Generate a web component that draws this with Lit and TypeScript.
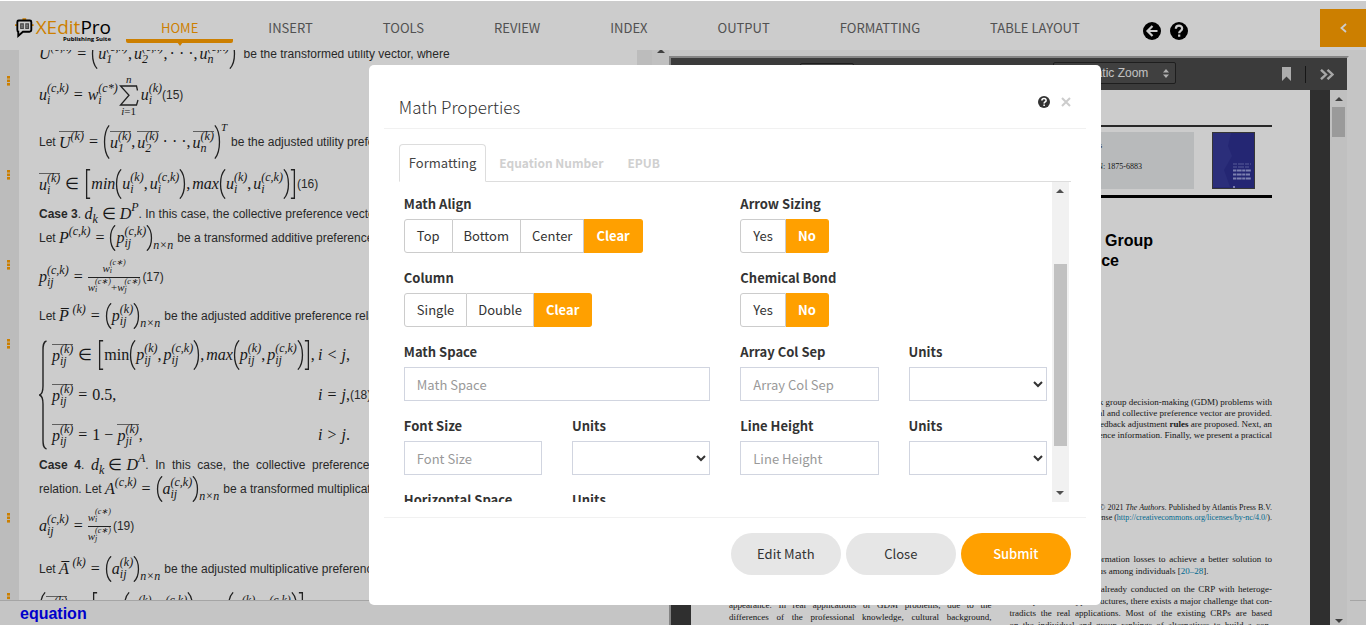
import { LitElement, html, css, svg, nothing, TemplateResult } from "lit";
import { customElement, property } from "lit/decorators.js";

type Part = TemplateResult | string;

/* ---------- math helpers ---------- */

const fencePaths: Record<string, TemplateResult> = {
  "(": svg`<path d="M7 0.5C0 9 0 31 7 39.5" />`,
  ")": svg`<path d="M1 0.5C8 9 8 31 1 39.5" />`,
  "[": svg`<path d="M7 1H3V39H7" />`,
  "]": svg`<path d="M1 1H5V39H1" />`,
};

const fence = (kind: string, size = "md") =>
  html`<svg class="fence ${size}" viewBox="0 0 8 40" preserveAspectRatio="none" aria-hidden="true">${fencePaths[kind]}</svg>`;

const scr = (base: string, sup: Part, sub: Part = "", bar = false) =>
  html`<span class="atom ${bar ? "bar" : ""}"><i>${base}</i><span class="stack"><i>${sup}</i><i>${sub}</i></span></span>`;

const rel = (s: string) => html`<span class="rel">${s}</span>`;
const comma = html`<span class="comma">,</span>`;
const nxn = html`<i class="low">n×n</i>`;

@customElement("math-editor")
export class MathEditor extends LitElement {
  static styles = css`
    :host {
      display: block;
      overflow: hidden;
      font: 12px/16px "Liberation Sans", Arial, sans-serif;
      color: #333;
      background: linear-gradient(to right, #ececec 19px, #fff 19px);
    }
    .scrolled { margin-top: -8px; }
    .row { display: flex; align-items: center; white-space: pre; height: 24px; }
    .h20 { height: 20px; }
    .h28 { height: 28px; }
    .h36 { height: 36px; }
    .h40 { height: 40px; }
    .h46 { height: 46px; }
    .h54 { height: 54px; }
    .h58 { height: 58px; }
    .gap { margin-top: 6px; }
    .mark { flex: none; width: 39px; align-self: flex-start; padding: 10px 0 0 7px; box-sizing: border-box; }
    .mark.near { padding-top: 4px; }
    .mark svg { display: block; }
    .math { display: inline-flex; align-items: center; font: 16px/16px "Liberation Serif", "Times New Roman", serif; color: #1c1c1c; }
    .text { padding-left: 4px; }
    .atom { display: inline-flex; align-items: center; height: 24px; }
    .bar { border-top: 1px solid #777; height: 22px; }
    .stack { display: inline-flex; flex-direction: column; font-size: 12px; line-height: 12px; margin-top: -2px; }
    .stack i { height: 12px; }
    .rel { margin: 0 5px; }
    .comma { margin-right: 2px; }
    .fence { width: 7px; height: 30px; fill: none; stroke: #2a2a2a; }
    .fence path { stroke-width: 1.3; vector-effect: non-scaling-stroke; }
    .fence.sm { height: 26px; }
    .fence.lg { height: 34px; }
    .low { font-size: 12px; line-height: 12px; align-self: flex-end; }
    .power { font-size: 11px; line-height: 12px; align-self: flex-start; margin-top: -4px; }
    .sum { display: inline-flex; flex-direction: column; align-items: center; margin: 0 2px 0 1px; }
    .sum i, .sum small { font-size: 11px; line-height: 11px; }
    .sum svg { display: block; }
    .frac { display: inline-flex; flex-direction: column; align-items: center; font-size: 11px; line-height: 12px; margin-right: 2px; }
    .frac .atom { height: 18px; }
    .frac .stack { font-size: 8px; line-height: 8px; }
    .frac .stack i { height: 8px; }
    .frac .top { display: flex; justify-content: center; align-self: stretch; border-bottom: 1px solid #2a2a2a; }
    .frac .den { display: flex; align-items: center; }
    .cases { display: flex; height: 120px; margin-top: 7px; white-space: pre; }
    .brace { width: 8px; height: 110px; align-self: center; fill: none; stroke: #2a2a2a; margin-right: 5px; }
    .lines { display: grid; grid-template-columns: 266px auto; grid-auto-rows: 40px; align-items: center; }
    .tail { align-self: center; }
  `;

  private mark(shown = true, near = false) {
    return html`<span class="mark ${near ? "near" : ""}">${shown
      ? html`<svg width="3" height="10" fill="#ff9f00" aria-hidden="true"><rect width="3" height="2.6" /><rect y="3.5" width="3" height="2.6" /><rect y="7" width="3" height="2.6" /></svg>`
      : nothing}</span>`;
  }

  private range(b: string, sub: string, word: Part) {
    return html`${fence("[")}${word}${fence("(")}${scr(b, "(k)", sub)}${comma}${scr(b, "(c,k)", sub)}${fence(")")}${comma}<i
        >max</i>${fence("(")}${scr(b, "(k)", sub)}${comma}${scr(b, "(c,k)", sub)}${fence(")")}${fence("]")}`;
  }

  render() {
    return html`
      <div class="scrolled">
        <div class="row">
          ${this.mark(false)}
          <span class="math">${scr("U", "(c,k)")}${rel("=")}${fence("(")}${scr("u", "(c,k)", "1")}${comma}${scr("u", "(c,k)", "2")}${comma}· · ·${comma}${scr("u", "(c,k)", "n")}${fence(")")}</span>
          <span class="text"> be the transformed utility vector, where</span>
        </div>
        <div class="row h58">
          ${this.mark()}
          <span class="math">${scr("u", "(c,k)", "i")}${rel("=")}${scr("w", "(c*)", "i")}<span class="sum"
              ><i>n</i><svg width="20" height="21" viewBox="0 0 20 21" fill="none" stroke="#2a2a2a" aria-hidden="true">
                <path d="M18.5 5.5L17.500 1H1.500L10 10.200L1.500 20H17.500L19 15" stroke-width="1.300" /></svg
              ><small><i>i</i>=1</small></span>${scr("u", "(k)", "i")}</span>
          <span>(15)</span>
        </div>
        <div class="row h36">
          ${this.mark(false)}
          <span>Let </span>
          <span class="math">${scr("U", "(k)", "", true)}${rel("=")}${fence("(", "lg")}${scr("u", "(k)", "1", true)}${comma}${scr("u", "(k)", "2", true)} · · ·${comma}${scr("u", "(k)", "n", true)}${fence(")", "lg")}<i class="power">T</i></span>
          <span class="text">be the adjusted utility preference</span>
        </div>
        <div class="row h36 gap">
          ${this.mark(true, true)}
          <span class="math">${scr("u", "(k)", "i", true)}${rel("∈")}${this.range("u", "i", html`<i>min</i>`)}</span>
          <span>(16)</span>
        </div>
        <div class="row">
          ${this.mark(false)}
          <span><b>Case 3</b>. </span>
          <span class="math">${scr("d", "", "k")} ∈ ${scr("D", "P")}</span>
          <span>. In this case, the collective preference vector</span>
        </div>
        <div class="row">
          ${this.mark(false)}
          <span>Let </span>
          <span class="math">${scr("P", "(c,k)")}${rel("=")}${fence("(", "sm")}${scr("p", "(c,k)", "ij")}${fence(")", "sm")}${nxn}</span>
          <span class="text">be a transformed additive preference</span>
        </div>
        <div class="row h54">
          ${this.mark()}
          <span class="math">${scr("p", "(c,k)", "ij")}${rel("=")}<span class="frac"
              ><span class="top">${scr("w", "(c∗)", "i")}</span
              ><span class="den">${scr("w", "(c∗)", "i")}+${scr("w", "(c∗)", "j")}</span></span></span>
          <span>(17)</span>
        </div>
        <div class="row">
          ${this.mark(false)}
          <span>Let </span>
          <span class="math">${scr("P̅ ", "(k)")}${rel("=")}${fence("(", "sm")}${scr("p", "(k)", "ij")}${fence(")", "sm")}${nxn}</span>
          <span class="text">be the adjusted additive preference relation</span>
        </div>
        <div class="cases">
          ${this.mark(true, true)}
          <svg class="brace" viewBox="0 0 8 110" aria-hidden="true">
            <path d="M7.500 1C4 2 4 6 4 10V46C4 51 3.500 54 0.500 55C3.500 56 4 59 4 64V100C4 104 4 108 7.500 109" stroke-width="1.400" />
          </svg>
          <div class="lines">
            <span class="math">${scr("p", "(k)", "ij", true)}${rel("∈")}${this.range("p", "ij", "min")},</span>
            <span class="math"><i>i</i>${rel("<")}<i>j</i>,</span>
            <span class="math">${scr("p", "(k)", "ij", true)}${rel("=")}0.5,</span>
            <span class="math"><i>i</i>${rel("=")}<i>j</i>,</span>
            <span class="math">${scr("p", "(k)", "ij", true)}${rel("=")}1 − ${scr("p", "(k)", "ji", true)},</span>
            <span class="math"><i>i</i>${rel(">")}<i>j</i>.</span>
          </div>
          <span class="tail">(18)</span>
        </div>
        <div class="row h20">
          ${this.mark(false)}
          <span><b>Case  4</b>.  </span>
          <span class="math">${scr("d", "", "k")} ∈ ${scr("D", "A")}</span>
          <span>.  In  this  case,  the  collective  preference  vector</span>
        </div>
        <div class="row h28">
          ${this.mark(false)}
          <span>relation. Let </span>
          <span class="math">${scr("A", "(c,k)")}${rel("=")}${fence("(", "sm")}${scr("a", "(c,k)", "ij")}${fence(")", "sm")}${nxn}</span>
          <span class="text">be a transformed multiplicative</span>
        </div>
        <div class="row h46">
          ${this.mark()}
          <span class="math">${scr("a", "(c,k)", "ij")}${rel("=")}<span class="frac"
              ><span class="top">${scr("w", "(c∗)", "i")}</span
              ><span class="den">${scr("w", "(c∗)", "j")}</span></span></span>
          <span>(19)</span>
        </div>
        <div class="row h40">
          ${this.mark(false)}
          <span>Let </span>
          <span class="math">${scr("A̅ ", "(k)")}${rel("=")}${fence("(", "sm")}${scr("a", "(k)", "ij")}${fence(")", "sm")}${nxn}</span>
          <span class="text">be the adjusted multiplicative preference</span>
        </div>
        <div class="row h36">
          ${this.mark(true, true)}
          <span class="math">${fence("(")} ${scr("a", "(k)", "ij", true)}${rel("∈")}${this.range("a", "ij", "min")},   <i>i</i>${rel("<")}<i>j</i>,</span>
        </div>
      </div>
    `;
  }
}

/* ---------- PDF preview ---------- */

@customElement("pdf-preview")
export class PdfPreview extends LitElement {
  static styles = css`
    :host {
      display: flex;
      flex-direction: column;
      overflow: hidden;
      border: 2px solid;
      border-color: #a5a5a5 #f7f7f7 #f7f7f7 #a5a5a5;
      border-bottom: 0;
      margin: 6px 1px 0 0;
      font-family: "Liberation Serif", "Times New Roman", serif;
    }
    .toolbar { flex: none; height: 32px; display: flex; align-items: center; background: #4a4a4a; }
    .page-no { width: 54px; height: 22px; margin-left: 129px; box-sizing: border-box; border: 1px solid #262626; border-radius: 2px; background: #5a5a5a; }
    .zoom { display: flex; align-items: center; margin: 0 0 2px auto; }
    .zoom select {
      appearance: none; width: 123px; height: 22px; box-sizing: border-box; padding: 0 7px;
      border: 1px solid #262626; border-radius: 2px; background: #505050; color: #f2f2f2;
      font: 12px "Liberation Sans", Arial, sans-serif;
    }
    .zoom svg { margin-left: -13px; pointer-events: none; }
    .tools { display: flex; align-items: center; margin: 0 13px 0 113px; gap: 14px; }
    .tools i { width: 1px; height: 17px; background: #1c1c1c; }
    .icon { display: block; padding: 0; border: 0; background: none; }
    .icon svg { display: block; }
    .view { flex: 1; min-height: 0; display: flex; background: #3b3b3b; }
    .page { flex: 1; min-width: 0; height: 100%; overflow: hidden; box-sizing: border-box; margin: 0 20px; padding: 35px 38px 0; background: #fff; color: #222; }
    .rule { border-top: 2px solid #333; }
    .masthead { display: flex; gap: 18px; height: 57px; margin: 5px 17px 6px 0; }
    .info { flex: 1; background: #e6e9ea; text-align: right; font-size: 8px; line-height: 21px; padding: 3px 52px 0 0; box-sizing: border-box; }
    .info p { margin: 0; }
    .info .short { padding-right: 40px; }
    .thick { border-top: 3px solid #000; }
    h1 { width: 424px; margin: 33px 0 126px; font: bold 16px/20px "Liberation Sans", Arial, sans-serif; color: #000; text-align: right; }
    h1 span { display: block; }
    h1 .second { padding-right: 34px; }
    .abstract { font-size: 9px; line-height: 11px; }
    .rights { margin: 62px 0 30px; font-size: 8px; line-height: 10px; }
    a { color: #0085b5; text-decoration: none; }
    .abstract div, .rights div { display: flex; justify-content: flex-end; white-space: pre; }
    .cols { display: grid; grid-template-columns: minmax(0, 1fr) minmax(0, 1fr); gap: 18px; font-size: 9px; line-height: 12px; }
    .cols div div { text-align-last: justify; white-space: nowrap; }
    .cols .last { text-align-last: left; }
    .left { padding-top: 46px; }
    .para { margin-top: 6px; }
    .bar { flex: none; width: 17px; display: flex; flex-direction: column; align-items: center; justify-content: space-between; background: #f1f1f1; }
    .bar svg { display: block; margin: 7px 0 2px; }
    .thumb { width: 13px; height: 30px; background: #c1c1c1; margin: 4px 0 auto; }
  `;

  render() {
    return html`
      <div class="toolbar">
        <input class="page-no" aria-label="Page" />
        <div class="zoom">
          <select aria-label="Zoom"><option>Automatic Zoom</option></select>
          <svg width="6" height="9" fill="#ddd" aria-hidden="true"><path d="M0 3.500L3 0L6 3.500ZM0 5.500L3 9L6 5.500Z" /></svg>
        </div>
        <div class="tools">
          <button class="icon" aria-label="Bookmark">
            <svg width="9" height="14" fill="#d8d8d8"><path d="M0 0H9V14L4.500 9.500L0 14Z" /></svg>
          </button>
          <i></i>
          <button class="icon" aria-label="More tools">
            <svg width="14" height="11" fill="none" stroke="#d0d0d0" stroke-width="2.400"><path d="M1 0.800L6 5.500L1 10.200M7.500 0.800L12.500 5.500L7.500 10.200" /></svg>
          </button>
        </div>
      </div>
      <div class="view">
        <article class="page">
          <div class="rule"></div>
          <div class="masthead">
            <div class="info"><p class="short">Systems</p><p>ISSN: 1875-6883</p></div>
            <svg width="43" height="57" viewBox="0 0 43 57" aria-hidden="true">
              <rect x="0.500" y="0.500" width="42" height="56" fill="#2e3090" stroke="#444" />
              <path d="M1 1H19L16 14L20 24L12 38L18 55H1Z" fill="#363a99" />
              <path d="M21 32H39M21 35H38" stroke="#6f74c0" stroke-dasharray="4 1 6 1" />
              <path d="M21 38.500H39M21 42.500H38M21 46.500H39" stroke="#9ba0dc" stroke-width="2" stroke-dasharray="3 0.600 5 0.600" />
              <path d="M21 55H23" stroke="#9ba0dc" stroke-width="2" />
            </svg>
          </div>
          <div class="thick"></div>
          <h1><span>Consensus Model for Group</span><span class="second">Preference</span></h1>
          <div class="abstract">
            <div>rank group decision-making (GDM) problems with</div>
            <div>individual and collective preference vector are provided.</div>
            <div>the feedback adjustment <b>rules</b> are proposed. Next, an</div>
            <div>preference information. Finally, we present a practical</div>
          </div>
          <div class="rights">
            <div>© 2021 <em>The Authors</em>. Published by Atlantis Press B.V.</div>
            <div>license (<a href="#license">http://creativecommons.org/licenses/by-nc/4.0/</a>).</div>
          </div>
          <div class="cols">
            <div class="left">
              <div>appearance. In real applications of GDM problems, due to the</div>
              <div>differences of the professional knowledge, cultural background,</div>
            </div>
            <div>
              <div>and thus reduce the information losses to achieve a better solution to</div>
              <div class="last">to reach a group consensus among individuals [<a href="#refs">20–28</a>].</div>
              <div class="para">Many works have been already conducted on the CRP with heteroge-</div>
              <div>neous preference type structures, there exists a major challenge that con-</div>
              <div>tradicts the real applications. Most of the existing CRPs are based</div>
              <div>on the individual and group rankings of alternatives to build a con-</div>
            </div>
          </div>
        </article>
        <div class="bar">
          <svg width="8" height="4" fill="#505050"><path d="M0 4L4 0L8 4Z" /></svg>
          <div class="thumb"></div>
          <svg width="8" height="4" fill="#505050"><path d="M0 0L4 4L8 0Z" /></svg>
        </div>
      </div>
    `;
  }
}

/* ---------- Math properties dialog ---------- */

@customElement("math-dialog")
export class MathDialog extends LitElement {
  static styles = css`
    :host {
      display: block;
      width: 732px;
      box-sizing: border-box;
      padding: 0 15px;
      border-radius: 5px;
      background: #fff;
      color: #333;
      font: 13px/20px "Noto Sans CJK SC", sans-serif;
    }
    button, input, select { font: inherit; color: inherit; box-sizing: border-box; margin: 0; }
    header { display: flex; align-items: center; height: 64px; padding: 0 15px; box-sizing: border-box; border-bottom: 1px solid #f1f1f1; }
    h2 { flex: 1; margin: 20px 0 0; font-size: 17px; font-weight: 300; line-height: 24px; }
    header button { padding: 0; margin: 11px 0 0 11px; border: 0; background: none; }
    header svg { display: block; }
    .body { padding: 15px 15px 0; }
    .tabs { display: flex; height: 38px; box-sizing: border-box; border-bottom: 1px solid #ddd; }
    .tabs button { height: 38px; padding: 0 12px; border: 0; background: none; color: #d0d0d0; font-size: 12px; font-weight: 700; }
    .tabs .on { padding: 0 9px; border: 1px solid #ddd; border-bottom-color: #fff; border-radius: 4px 4px 0 0; background: #fff; color: #444; font-size: 13px; font-weight: 400; margin-right: 1px; }
    .pane { display: flex; height: 320px; overflow: hidden; margin-right: 2px; }
    .form { flex: 1; display: grid; grid-template-columns: repeat(4, 1fr); column-gap: 30px; row-gap: 10px; align-content: start; padding: 7px 5px 0; }
    .field { min-width: 0; border: 0; padding: 0; margin: 0; }
    .wide { grid-column: span 2; }
    .field > label, .field > legend { display: block; padding: 0; line-height: 30px; font-weight: 700; }
    .field > input, .field > select { display: block; width: 100%; height: 34px; border: 1px solid #d1d5e0; border-radius: 0; padding: 0 12px; background: #fff; }
    .field > select { padding: 0; outline: 0; }
    ::placeholder { color: #999; opacity: 1; }
    .seg { display: flex; }
    .seg label { position: relative; height: 34px; box-sizing: border-box; padding: 0 11px; border: 1px solid #ccc; border-left-width: 0; line-height: 32px; }
    .seg label:first-child { border-left-width: 1px; border-radius: 3px 0 0 3px; padding: 0 12px; }
    .seg label:last-child { border-radius: 0 3px 3px 0; padding: 0 12px; }
    .seg .on { background: #ffa000; border-color: #ffa000; color: #fff; font-weight: 700; }
    .seg input { position: absolute; inset: 0; opacity: 0; width: 100%; height: 100%; margin: 0; }
    .bar { flex: none; width: 17px; display: flex; flex-direction: column; align-items: center; background: #f1f1f1; }
    .bar svg { display: block; margin: 7px 0; }
    .thumb { width: 13px; height: 182px; background: #c1c1c1; margin: 64px 0 auto; }
    footer { display: flex; justify-content: flex-end; gap: 5px; margin-top: 15px; padding: 15px 15px 30px; border-top: 1px solid #f1f1f1; }
    footer button { width: 110px; height: 42px; border: 0; border-radius: 21px; background: #e6e6e6; }
    footer .primary { background: #ffa000; color: #fff; font-weight: 500; }
  `;

  private choice(name: string, label: string, options: string[], active: string) {
    return html`<fieldset class="field wide">
      <legend>${label}</legend>
      <div class="seg">
        ${options.map(o => html`<label class=${o === active ? "on" : ""}><input type="radio" name=${name} ?checked=${o === active} />${o}</label>`)}
      </div>
    </fieldset>`;
  }

  private text(id: string, label: string, wide = false) {
    return html`<div class="field ${wide ? "wide" : ""}"><label for=${id}>${label}</label><input id=${id} placeholder=${label} /></div>`;
  }

  private units(id: string) {
    return html`<div class="field"><label for=${id}>Units</label><select id=${id}><option></option></select></div>`;
  }

  render() {
    return html`
      <header>
        <h2>Math Properties</h2>
        <button aria-label="Help">
          <svg width="12" height="12" viewBox="0 0 20 20"><circle cx="10" cy="10" r="10" fill="#333" /><path d="M6.500 7.500C6.500 3 13.500 3 13.500 7.300C13.500 10 10.200 9.800 10.200 12.500M10.200 14V16.500" fill="none" stroke="#fff" stroke-width="2.600" /></svg>
        </button>
        <button aria-label="Close dialog">
          <svg width="10" height="10" fill="none" stroke="#ccc" stroke-width="2"><path d="M1 1L9 9M9 1L1 9" /></svg>
        </button>
      </header>
      <div class="body">
        <div class="tabs" role="tablist">
          <button class="on" role="tab" aria-selected="true">Formatting</button>
          <button role="tab">Equation Number</button>
          <button role="tab">EPUB</button>
        </div>
        <div class="pane">
          <form class="form">
            ${this.choice("align", "Math Align", ["Top", "Bottom", "Center", "Clear"], "Clear")}
            ${this.choice("arrow", "Arrow Sizing", ["Yes", "No"], "No")}
            ${this.choice("column", "Column", ["Single", "Double", "Clear"], "Clear")}
            ${this.choice("bond", "Chemical Bond", ["Yes", "No"], "No")}
            ${this.text("space", "Math Space", true)}
            ${this.text("colsep", "Array Col Sep")}
            ${this.units("colsep-units")}
            ${this.text("size", "Font Size")}
            ${this.units("size-units")}
            ${this.text("height", "Line Height")}
            ${this.units("height-units")}
            ${this.text("hspace", "Horizontal Space")}
            ${this.units("hspace-units")}
          </form>
          <div class="bar">
            <svg width="8" height="4" fill="#505050"><path d="M0 4L4 0L8 4Z" /></svg>
            <div class="thumb"></div>
            <svg width="8" height="4" fill="#505050"><path d="M0 0L4 4L8 0Z" /></svg>
          </div>
        </div>
      </div>
      <footer>
        <button>Edit Math</button>
        <button>Close</button>
        <button class="primary">Submit</button>
      </footer>
    `;
  }
}

/* ---------- Application shell ---------- */

@customElement("app-root")
export class AppRoot extends LitElement {
  static styles = css`
    :host { display: flex; flex-direction: column; position: relative; height: 100vh; overflow: hidden; background: #fff; font-family: "Noto Sans CJK SC", sans-serif; }
    .top { flex: none; height: 50px; display: flex; align-items: flex-start; }
    .logo { display: flex; gap: 2px; width: 111px; padding: 17px 0 0 15px; box-sizing: border-box; color: #000; }
    .name { display: flex; flex-direction: column; align-items: flex-end; font: 19px/20px "Open Sans", sans-serif; }
    .name b { font-weight: 400; color: #ff9f00; }
    .name small { font: bold 6px/7px "Open Sans", sans-serif; margin-top: -1px; }
    nav { display: flex; margin-left: 15px; }
    nav a { position: relative; padding: 18px 35px 0; height: 21px; font-size: 13px; line-height: 20px; color: #666; text-decoration: none; white-space: nowrap; }
    nav .on { color: #ff9f00; border-bottom: 4px solid #ff9f00; border-radius: 0 0 2px 2px; }
    nav .on::after { content: ""; position: absolute; top: 42px; left: 50%; margin-left: -3px; border: 3px solid transparent; border-top: 4px solid #ff9f00; }
    .round { display: flex; gap: 9px; padding: 22px 0 0; margin-left: 28px; }
    .round button { padding: 0; border: 0; background: none; }
    .round svg { display: block; }
    .fold { width: 46px; height: 38px; margin: 9px 0 0 auto; padding: 0; border: 0; background: #ff9f00; display: grid; place-items: center; }
    main { flex: 1; min-height: 0; display: grid; grid-template-columns: minmax(0, 669fr) minmax(0, 681fr) 16px; background: #f7f7f7; }
    .side { display: grid; grid-template: minmax(0, 1fr) 25px / minmax(0, 1fr) 15px 17px; min-height: 0; }
    .gutter { background: #ececec; }
    .track { background: #f1f1f1; display: flex; justify-content: center; }
    .status { grid-column: 1 / -1; border-top: 1px solid #cfcfcf; background: #f7f7f7; padding-left: 20px; font: bold 16px/26px "Liberation Sans", Arial, sans-serif; color: #00f; }
    pdf-preview { min-height: 0; }
    .edge { align-self: end; height: 24px; border-top: 1px solid #cfcfcf; }
    .shade { position: absolute; inset: 1px 0 0; background: rgba(0, 0, 0, 0.2); padding: 64px 0 0 27%; }
  `;

  @property() active = "HOME";

  private items = ["HOME", "INSERT", "TOOLS", "REVIEW", "INDEX", "OUTPUT", "FORMATTING", "TABLE LAYOUT"];

  render() {
    return html`
      <div class="top">
        <div class="logo">
          <svg width="20" height="21" viewBox="0 0 20 21" fill="none" aria-hidden="true">
            <path d="M0 8H2M18 8H20M8 1.500H12" stroke="#ff9f00" stroke-width="2" />
            <path d="M4 3H16Q17.500 3 17.500 4.500V13Q17.500 15 15.500 15H8.500L3.500 19.500V15Q2.500 15 2.500 13V4.500Q2.500 3 4 3Z" stroke="#000" stroke-width="2" />
            <path d="M5.500 6H9.500V12H5.500ZM11 6H15V12H11Z" fill="#555" />
            <path d="M6.500 8H8.500M6.500 10H8.500M12 8H14M12 10H14" stroke="#ddd" stroke-width="0.800" />
          </svg>
          <span class="name"><span><b>XEdit</b>Pro</span><small>Publishing Suite</small></span>
        </div>
        <nav>${this.items.map(i => html`<a href="#" class=${i === this.active ? "on" : ""}>${i}</a>`)}</nav>
        <div class="round">
          <button aria-label="Back">
            <svg width="18" height="18" viewBox="0 0 18 18"><circle cx="9" cy="9" r="9" /><path d="M14.500 9H5M9.500 4L4.500 9L9.500 14" fill="none" stroke="#fff" stroke-width="2.200" /></svg>
          </button>
          <button aria-label="Help">
            <svg width="18" height="18" viewBox="0 0 20 20"><circle cx="10" cy="10" r="10" /><path d="M6.500 7.500C6.500 3 13.500 3 13.500 7.300C13.500 10 10.200 9.800 10.200 12.500M10.200 14V16.500" fill="none" stroke="#fff" stroke-width="2.500" /></svg>
          </button>
        </div>
        <button class="fold" aria-label="Collapse">
          <svg width="7" height="10" fill="none" stroke="#fff" stroke-width="1.800"><path d="M6 1L1.500 5L6 9" /></svg>
        </button>
      </div>
      <main>
        <div class="side">
          <math-editor></math-editor>
          <div class="gutter"></div>
          <div class="track"><svg width="8" height="4" fill="#505050"><path d="M0 3L4 -1L8 3Z" /></svg></div>
          <div class="status">equation</div>
        </div>
        <pdf-preview></pdf-preview>
        <div class="edge"></div>
      </main>
      <div class="shade"><math-dialog role="dialog" aria-label="Math Properties"></math-dialog></div>
    `;
  }
}
